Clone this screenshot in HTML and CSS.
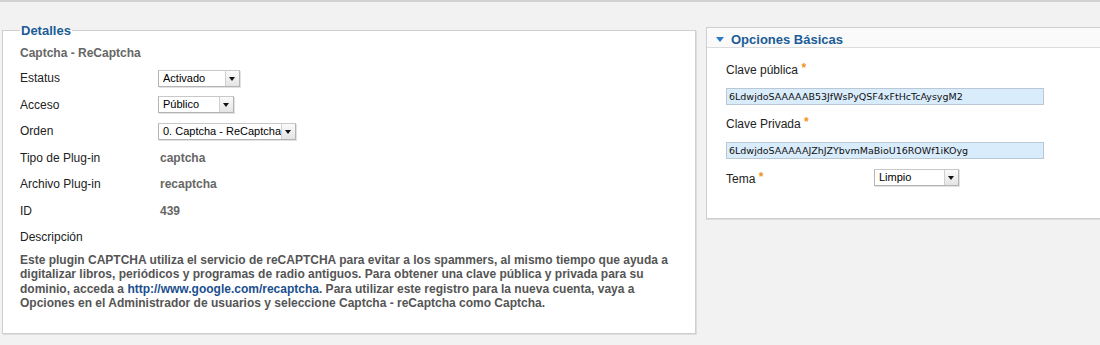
FILE: index.html
```html
<!DOCTYPE html>
<html lang="es">
<head>
<meta charset="UTF-8" />
<title>Plug-in: Captcha - ReCaptcha</title>
<link rel="stylesheet" href="styles.css">
</head>
<body>

<div class="page">
  <fieldset class="details">
    <legend>Detalles</legend>
    <h2 class="plugin-name">Captcha - ReCaptcha</h2>

    <div class="row">
      <label>Estatus</label>
      <span class="select" style="width:82px">Activado<i class="arrow"></i></span>
    </div>
    <div class="row">
      <label>Acceso</label>
      <span class="select" style="width:76px">Público<i class="arrow"></i></span>
    </div>
    <div class="row">
      <label>Orden</label>
      <span class="select" style="width:138px">0. Captcha - ReCaptcha<i class="arrow"></i></span>
    </div>
    <div class="row">
      <label>Tipo de Plug-in</label>
      <span class="value">captcha</span>
    </div>
    <div class="row">
      <label>Archivo Plug-in</label>
      <span class="value">recaptcha</span>
    </div>
    <div class="row">
      <label>ID</label>
      <span class="value">439</span>
    </div>
    <div class="row">
      <label>Descripción</label>
    </div>
    <p class="description">
      Este plugin CAPTCHA utiliza el servicio de reCAPTCHA para evitar a los spammers, al mismo tiempo que ayuda a
      digitalizar libros, periódicos y programas de radio antiguos. Para obtener una clave pública y privada para su
      dominio, acceda a <a href="#">http://www.google.com/recaptcha</a>. Para utilizar este registro para la nueva cuenta, vaya a
      Opciones en el Administrador de usuarios y seleccione Captcha - reCaptcha como Captcha.
    </p>
  </fieldset>

  <div class="options">
    <h3 class="options-title"><span class="toggle"></span>Opciones Básicas</h3>
    <div class="options-body">
      <label class="field-label">Clave pública <span class="star">*</span></label>
      <input class="key" type="text" value="6LdwjdoSAAAAAB53JfWsPyQSF4xFtHcTcAysygM2" />

      <label class="field-label">Clave Privada <span class="star">*</span></label>
      <input class="key" type="text" value="6LdwjdoSAAAAAJZhJZYbvmMaBioU16ROWf1iKOyg" />

      <div class="theme-row">
        <label class="field-label">Tema <span class="star">*</span></label>
        <span class="select" style="width:85px">Limpio<i class="arrow"></i></span>
      </div>
    </div>
  </div>
</div>

</body>
</html>
```

FILE: styles.css
```css
html, body {
  margin: 0;
  overflow: hidden;
}
body {
  font-family: "Liberation Sans", Arial, sans-serif;
  font-size: 12px;
  color: #222;
  background: #f2f2f2;
  border-top: 2px solid #d2d2d2;
  height: 343px;
}
.page {
  display: flex;
  align-items: flex-start;
  width: 1160px;
  padding-top: 21px;
}
.details {
  flex: none;
  margin: 0 0 0 2px;
  width: 658px;
  height: 301px;
  padding: 8px 17px 0 17px;
  background: #fff;
  border: 1px solid #cfcfcf;
  box-shadow: 1px 1px 0 #dedede;
}
.details legend {
  color: #1b5c96;
  font-weight: bold;
  font-size: 13px;
  padding: 0 1px;
  margin-left: 0;
}
.plugin-name {
  margin: 0 0 5px 0;
  font-size: 12px;
  color: #666;
}
.row {
  display: flex;
  align-items: center;
  height: 26.5px;
}
.row label {
  width: 138px;
  flex: none;
}
.value {
  color: #666;
  font-weight: bold;
  padding-left: 2px;
}
.select {
  position: relative;
  display: inline-block;
  box-sizing: border-box;
  height: 17px;
  line-height: 15px;
  padding-left: 4px;
  font-family: "Liberation Sans", Arial, sans-serif;
  font-size: 11px;
  color: #000;
  background: #fff;
  border: 1px solid #b4b4b4;
  border-top-color: #c8c8c8;
  box-shadow: 1px 1px 0 #e2e2e2;
  white-space: nowrap;
}
.arrow {
  position: absolute;
  right: 0;
  top: 0;
  width: 13px;
  height: 15px;
  background: linear-gradient(#fafafa, #e4e4e4);
  border-left: 1px solid #d0d0d0;
}
.arrow::after {
  content: "";
  position: absolute;
  left: 3px;
  top: 6px;
  border-left: 3.5px solid transparent;
  border-right: 3.5px solid transparent;
  border-top: 4px solid #111;
}
.description {
  margin: 2px 0 0 0;
  width: 650px;
  line-height: 14.5px;
  font-weight: bold;
  color: #555;
}
.description a {
  color: #1a4f8e;
  text-decoration: none;
}
.options {
  flex: none;
  margin-left: 10px;
  margin-top: 4px;
  width: 420px;
  height: 190px;
  background: #fff;
  border: 1px solid #cfcfcf;
  box-shadow: 0 1px 0 #dedede;
}
.options-title {
  margin: 0;
  height: 19px;
  line-height: 23px;
  padding-left: 9px;
  font-size: 13px;
  color: #1b5c96;
  background: #fafafa;
  border-bottom: 1px solid #dcdcdc;
}
.toggle {
  display: inline-block;
  vertical-align: 2px;
  margin-right: 7px;
  border-left: 4px solid transparent;
  border-right: 4px solid transparent;
  border-top: 5px solid #2a7ac6;
}
.options-body {
  padding: 13px 0 0 19px;
}
.field-label {
  display: block;
  height: 15px;
  margin-bottom: 12px;
}
.star {
  color: #f0931e;
  font-weight: bold;
  vertical-align: 2px;
}
.key {
  display: block;
  box-sizing: border-box;
  width: 318px;
  height: 17px;
  margin: 0 0 10px 0;
  padding: 0 2px;
  font-family: "DejaVu Sans", sans-serif;
  font-size: 9.5px;
  color: #111;
  background: #d9ecfb;
  border: 1px solid #b9c8d4;
}
.theme-row {
  display: flex;
  align-items: center;
  margin-top: 1px;
}
.theme-row .field-label {
  width: 148px;
  margin: 0;
}
```
